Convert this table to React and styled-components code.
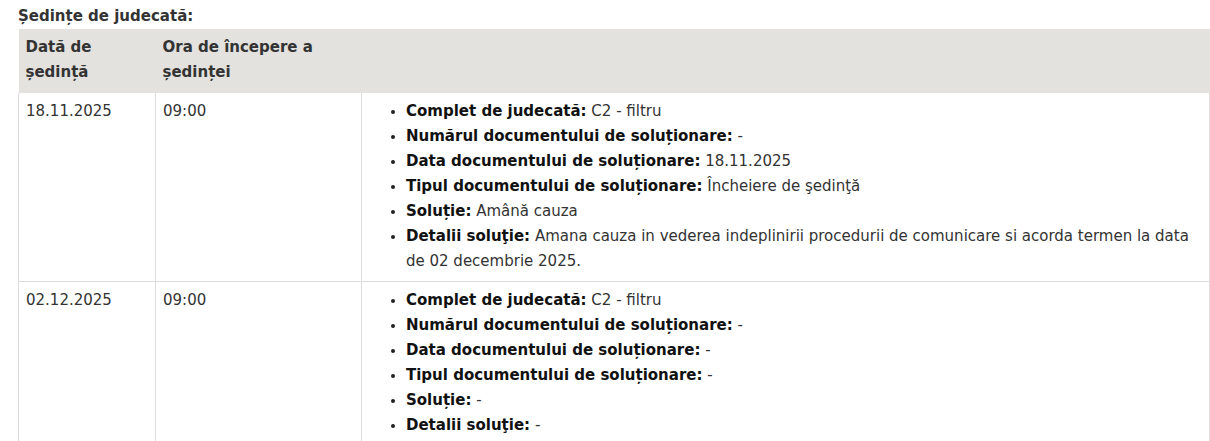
import styled, { createGlobalStyle } from "styled-components";

const GlobalStyle = createGlobalStyle`
	html, body {
		margin: 0;
		padding: 0;
		background: #fff;
		overflow: hidden;
	}
	body {
		font-family: "DejaVu Sans", Verdana, sans-serif;
		font-size: 15px;
		line-height: 25px;
		color: #333;
	}
`;

// Page wrapper
const Page = styled.div`
	padding: 4px 0 0 18px;
`;

const Title = styled.div`
	font-weight: bold;
	color: #333;
`;

// Table parts
const Table = styled.table`
	width: 100%;
	border-collapse: collapse;
	table-layout: fixed;
`;

const HeadCell = styled.th`
	background: #e3e2df;
	color: #333;
	font-weight: bold;
	text-align: left;
	vertical-align: top;
	padding: 6px 7px 8px 7px;
	width: ${(p) => (p.$w ? `${p.$w}px` : "auto")};
`;

const Cell = styled.td`
	border: 1px solid #dcdcdc;
	border-top: none;
	vertical-align: top;
	padding: 6px 7px 7px 7px;
	color: #333;
`;

const Details = styled.ul`
	margin: 0;
	padding-left: 37px;
	list-style: disc;
	li::marker {
		font-size: 13px;
		color: #222;
	}
`;

const Label = styled.b`
	color: #111;
`;

const sessions = [
	{
		date: "18.11.2025",
		hour: "09:00",
		items: [
			["Complet de judecată:", "C2 - filtru"],
			["Numărul documentului de soluționare:", "-"],
			["Data documentului de soluționare:", "18.11.2025"],
			["Tipul documentului de soluționare:", "Încheiere de şedinţă"],
			["Soluție:", "Amână cauza"],
			[
				"Detalii soluţie:",
				"Amana cauza in vederea indeplinirii procedurii de comunicare si acorda termen la data de 02 decembrie 2025.",
			],
		],
	},
	{
		date: "02.12.2025",
		hour: "09:00",
		items: [
			["Complet de judecată:", "C2 - filtru"],
			["Numărul documentului de soluționare:", "-"],
			["Data documentului de soluționare:", "-"],
			["Tipul documentului de soluționare:", "-"],
			["Soluție:", "-"],
			["Detalii soluţie:", "-"],
		],
	},
];

const App = () => {
	return (
		<Page>
			<GlobalStyle />
			<Title>Ședințe de judecată:</Title>
			<Table>
				<thead>
					<tr>
						<HeadCell $w={123}>Dată de ședință</HeadCell>
						<HeadCell $w={192}>Ora de începere a ședinței</HeadCell>
						<HeadCell></HeadCell>
					</tr>
				</thead>
				<tbody>
					{sessions.map((s) => (
						<tr key={s.date}>
							<Cell>{s.date}</Cell>
							<Cell>{s.hour}</Cell>
							<Cell>
								<Details>
									{s.items.map(([label, value]) => (
										<li key={label}>
											<Label>{label}</Label> {value}
										</li>
									))}
								</Details>
							</Cell>
						</tr>
					))}
				</tbody>
			</Table>
		</Page>
	);
};

export default App;
